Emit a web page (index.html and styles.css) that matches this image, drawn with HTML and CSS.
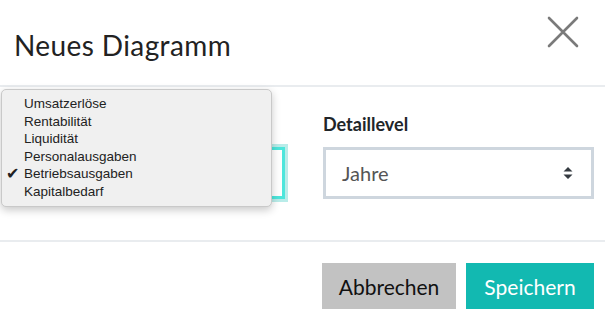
FILE: index.html
```html
<!DOCTYPE html>
<html lang="de">
<head>
<meta charset="utf-8">
<link rel="stylesheet" href="styles.css">
</head>
<body>
<div class="modal">
  <div class="header">
    <h1 class="title">Neues Diagramm</h1>
    <button class="close" aria-label="Schließen">
      <svg width="32" height="32" viewBox="0 0 32 32"><path d="M2 2 L30 30 M30 2 L2 30" stroke="#7a7a7a" stroke-width="2.6" stroke-linecap="round"/></svg>
    </button>
  </div>
  <div class="body">
    <div class="field">
      <div class="label"></div>
      <div class="select focused"></div>
    </div>
    <div class="field">
      <label class="label">Detaillevel</label>
      <div class="select"><span>Jahre</span>
        <svg class="arrows" width="10" height="14" viewBox="0 0 10 14"><path d="M5 1 L9.5 5.5 H0.5 Z M5 13 L9.5 8.5 H0.5 Z" fill="#343a40"/></svg>
      </div>
    </div>
    <ul class="popup">
      <li>Umsatzerlöse</li>
      <li>Rentabilität</li>
      <li>Liquidität</li>
      <li>Personalausgaben</li>
      <li class="checked">Betriebsausgaben</li>
      <li>Kapitalbedarf</li>
    </ul>
  </div>
  <div class="footer">
    <button class="btn cancel">Abbrechen</button>
    <button class="btn save">Speichern</button>
  </div>
</div>
</body>
</html>
```
FILE: styles.css
```css
* { box-sizing: border-box; }
html, body { margin: 0; padding: 0; background: #fff; }
body { font-family: "Lato", "Open Sans", sans-serif; color: #212529; width: 605px; height: 321px; overflow: hidden; }
.modal { display: flex; flex-direction: column; }
.header {
  height: 87px;
  display: flex;
  align-items: center;
  justify-content: space-between;
  padding: 0 26px 8px 14px;
  border-bottom: 2px solid #e9ecef;
}
.title { margin: 0; font-weight: 400; font-size: 28px; letter-spacing: 0.4px; color: #222; padding-top: 12px; }
.close { background: none; border: 0; padding: 0; margin-top: -14px; width: 32px; height: 32px; }
.close svg { display: block; }
.body {
  position: relative;
  display: grid;
  grid-template-columns: 1fr 1fr;
  column-gap: 38px;
  padding: 27px 11px 41px 14px;
  border-bottom: 2px solid #e9ecef;
}
.field { display: flex; flex-direction: column; }
.label { font-weight: 700; font-size: 18px; line-height: 20px; height: 20px; margin-bottom: 13px; color: #212529; }
.select {
  height: 52px;
  border: 3px solid #ced6de;
  display: flex;
  align-items: center;
  justify-content: space-between;
  padding: 0 18px 0 16px;
  font-size: 20px;
  color: #555;
}
.select.focused { border-color: #4de6dc; box-shadow: 0 0 0 3px #b9ece9; }
.arrows { display: block; }
.popup {
  position: absolute;
  left: 1px;
  top: 2px;
  width: 271px;
  height: 118px;
  margin: 0;
  padding: 5px 0 0 0;
  list-style: none;
  background: #f0f0f0;
  border: 1px solid #c9c9c9;
  border-radius: 5px;
  box-shadow: 0 3px 8px rgba(0,0,0,0.22);
  font-family: "Liberation Sans", "DejaVu Sans", sans-serif;
  font-size: 13.5px;
  color: #222;
}
.popup li { height: 17.5px; line-height: 17.5px; padding-left: 22px; position: relative; }
.popup li.checked::before {
  content: "✔";
  position: absolute;
  left: 4px;
  top: 0;
  font-family: "DejaVu Sans", sans-serif;
  font-size: 16px;
  color: #222;
}
.footer {
  display: flex;
  justify-content: flex-end;
  gap: 10px;
  padding: 21px 11px 0 0;
}
.btn {
  border: 0;
  height: 46px;
  font-family: "Lato", "Open Sans", sans-serif;
  font-size: 21px;
  padding: 0;
}
.cancel { background: #c2c2c2; color: #111; width: 134px; }
.save { background: #12b9b1; color: #fff; width: 128px; }
```
